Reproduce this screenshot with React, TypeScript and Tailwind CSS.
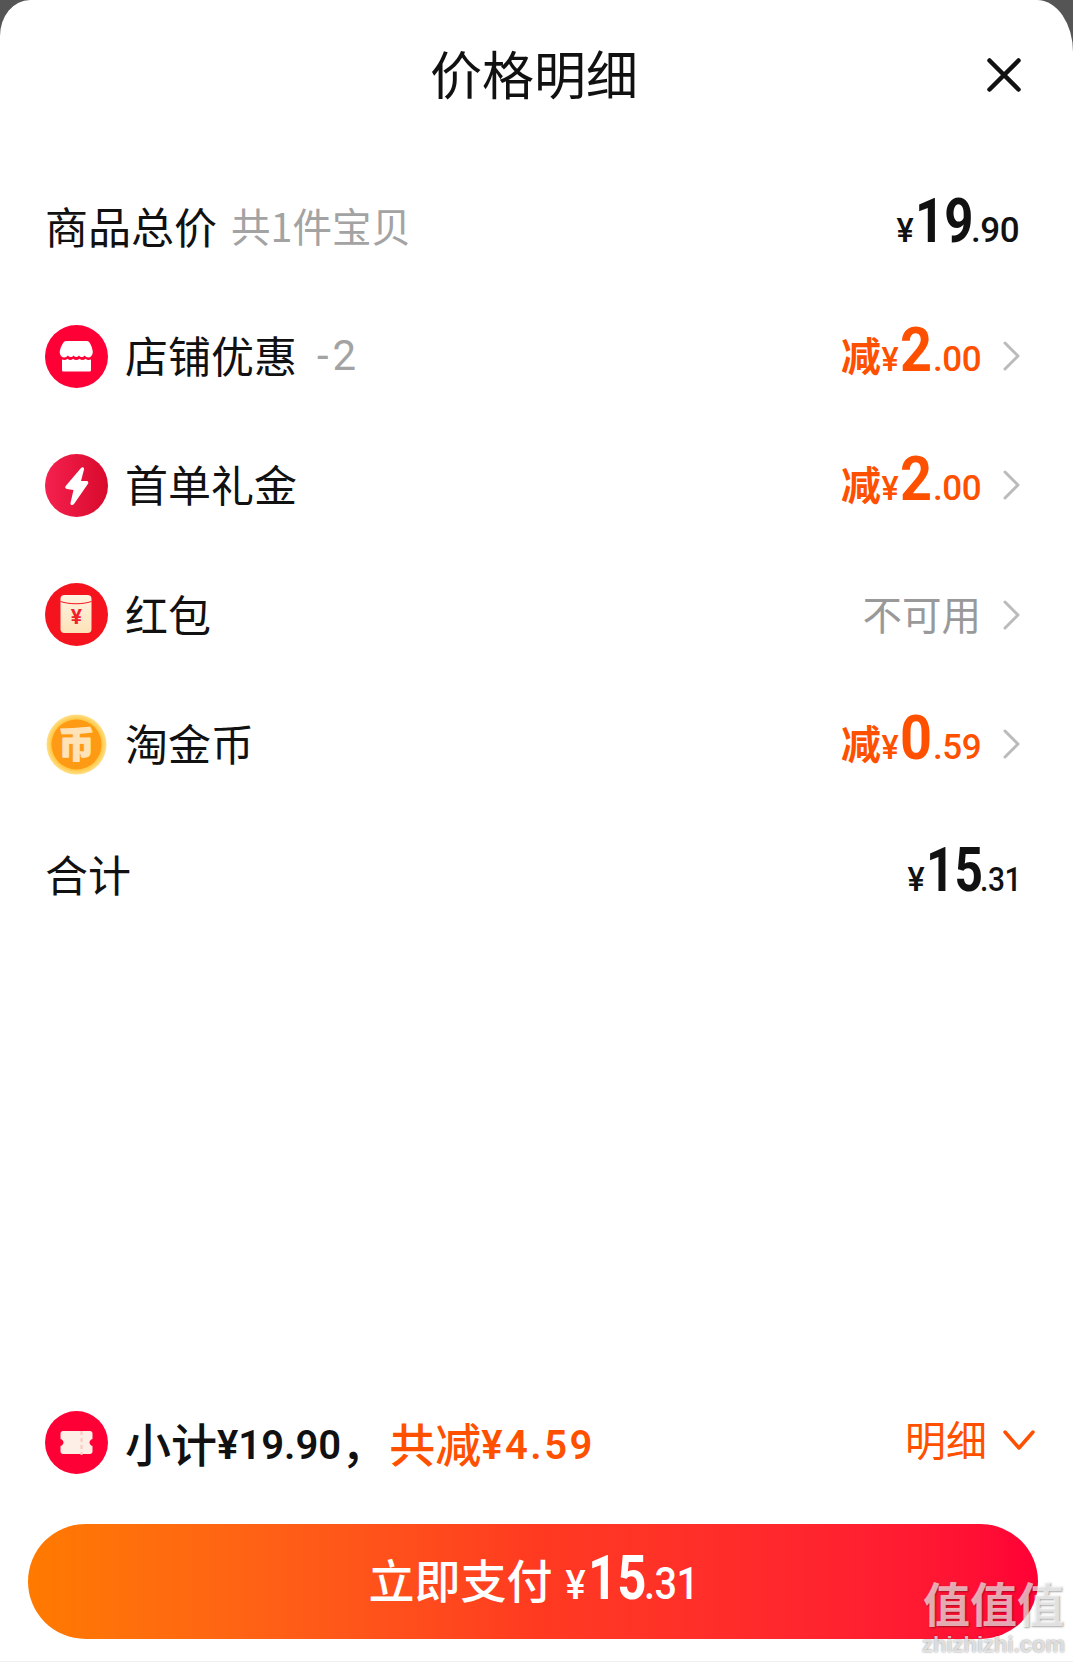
const cjk = '[font-family:"Noto_Sans_CJK_SC",sans-serif]';

// Amount with the small yen sign, a large integer part and small decimals
function Price({ int, dec, intClass, decClass, tone, yenClass = 'text-[34px]' }: { int: string; dec: string; intClass: string; decClass: string; tone: string; yenClass?: string }) {
  return (
    <span className={`flex items-baseline font-['Roboto',sans-serif] ${tone}`}>
      <span className={`${yenClass} scale-x-[0.95] font-medium mr-px`}>¥</span>
      <span className={`inline-block origin-left text-[62px] leading-none font-bold ${intClass}`}>{int}</span>
      <span className={`inline-block origin-left font-medium tracking-[-0.5px] ${decClass}`}>.{dec}</span>
    </span>
  );
}

function Discount({ int, dec }: { int: string; dec: string }) {
  return (
    <span className="flex items-baseline pb-[7px] text-[#ff5000]">
      <span className={`${cjk} text-[40px] font-bold leading-none`}>减</span>
      <Price int={int} dec={dec} intClass="w-[33px] scale-x-[0.9]" decClass="w-[48px] text-[35px]" tone="text-[#ff5000]" />
    </span>
  );
}

function Arrow() {
  return (
    <svg viewBox="0 0 18 30" className="ml-[22px] -mr-[2px] w-[18px] h-[30px] shrink-0">
      <path d="M2 2l13 13L2 28" fill="none" stroke="#bbbbbb" strokeWidth="3" strokeLinecap="round" strokeLinejoin="round" />
    </svg>
  );
}

function StoreIcon() {
  return (
    <svg viewBox="0 0 63 63" className="w-[63px] h-[63px] shrink-0">
      <circle cx="31.5" cy="31.5" r="31.5" fill="#ff0036" />
      <path d="M21 16h21c2.500 0 5 5 5.700 10 .5 3.500-1.700 6.500-4.200 6.500-1.800 0-2.900-.9-4-2-1.500 2-4 2-5.500 0-1.800 2-3.700 2-5.500 0-1.500 2-4 2-5.500 0-1.100 1.100-2.200 2-4 2-2.500 0-4.700-3-4.200-6.500C16 21 18.500 16 21 16z" fill="#fff" />
      <path d="M17 34.500c2 .8 4 .6 5.500-.8 2 1.800 4 1.800 5.500 0 2 1.800 4.500 1.800 6.500 0 2 1.800 4 1.800 6 0 1.500 1.400 3.500 1.600 5.500.8V45c0 1-.8 1.500-1.500 1.500H18.500c-.8 0-1.500-.5-1.500-1.500z" fill="#fff" />
    </svg>
  );
}

function BoltIcon() {
  return (
    <svg viewBox="0 0 63 63" className="w-[63px] h-[63px] shrink-0">
      <defs>
        <linearGradient id="boltBg" x1="0" x2="1" y1="0" y2="0">
          <stop offset="0" stopColor="#f5204f" />
          <stop offset="1" stopColor="#d80a2c" />
        </linearGradient>
      </defs>
      <circle cx="31.5" cy="31.5" r="31.5" fill="url(#boltBg)" />
      <path d="M36 14c1.500-1.500 3.500-.5 3 1.500L36 27h5.500c1.800 0 2.300 1.500 1.500 2.800L29 50c-1.500 2-4 1-3.500-1l3-13-6.500-1c-1.800-.3-2.300-1.800-1.300-3z" fill="#fff" />
    </svg>
  );
}

function EnvelopeIcon() {
  return (
    <svg viewBox="0 0 63 63" className="w-[63px] h-[63px] shrink-0">
      <defs>
        <linearGradient id="envBg" x1="0" x2="0" y1="0" y2="1">
          <stop offset="0" stopColor="#fff3e2" />
          <stop offset="1" stopColor="#fde2b8" />
        </linearGradient>
      </defs>
      <circle cx="31.5" cy="31.5" r="31.5" fill="#f5141e" />
      <rect x="15.5" y="12" width="31" height="38" rx="4" fill="url(#envBg)" />
      <path d="M15.5 18.500c9 3 22 3 31 0" fill="none" stroke="#f5141e" strokeWidth="1" />
      <text x="31.500" y="41" textAnchor="middle" fontSize="21" fontWeight="700" fill="#f0232c" fontFamily="Roboto, sans-serif">¥</text>
    </svg>
  );
}

function CoinIcon() {
  return (
    <svg viewBox="0 0 63 63" className="w-[63px] h-[63px] shrink-0">
      <defs>
        <radialGradient id="coinRim">
          <stop offset="0.8" stopColor="#ffc133" />
          <stop offset="1" stopColor="#ffe08a" />
        </radialGradient>
      </defs>
      <circle cx="31.500" cy="31.500" r="30" fill="url(#coinRim)" />
      <circle cx="31.500" cy="31.500" r="25" fill="#ff9a14" />
      <text x="31.500" y="44.500" textAnchor="middle" fontSize="36" fontWeight="900" fill="#ffe3b8" stroke="#ffe3b8" strokeWidth="1.200" strokeLinejoin="round" fontFamily="'Noto Sans CJK SC', sans-serif">币</text>
    </svg>
  );
}

function TicketIcon() {
  return (
    <svg viewBox="0 0 63 63" className="w-[63px] h-[63px] shrink-0">
      <circle cx="31.500" cy="31.500" r="31.500" fill="#ff0036" />
      <path d="M15.500 22.500c0-1.500 1-2.500 2.500-2.500h27c1.500 0 2.500 1 2.500 2.500v5.500c-2 .6-3 2-3 3.500s1 2.900 3 3.500v5.500c0 1.500-1 2.500-2.500 2.500H18c-1.500 0-2.500-1-2.500-2.500V35c2-.6 3-2 3-3.500s-1-2.900-3-3.500z" fill="#fdeee6" />
      <path d="M36.500 20v24" stroke="#fbc9bd" strokeWidth="2" strokeDasharray="4 3" />
    </svg>
  );
}

const rows = [
  { label: '首单礼金', icon: <BoltIcon />, right: <Discount int="2" dec="00" /> },
  { label: '红包', icon: <EnvelopeIcon />, right: <span className="pb-[4px] text-[39.5px] text-[#999999]">不可用</span> },
  { label: '淘金币', icon: <CoinIcon />, right: <Discount int="0" dec="59" /> },
];

export default function App() {
  return (
    <div className={`relative w-[1073px] h-[1662px] overflow-hidden bg-[#555555] ${cjk}`}>
      <div className="flex flex-col h-full bg-white rounded-tl-[30px_36px] rounded-tr-[36px_52px] text-[#111111]">
        <header className="relative flex h-[162px] shrink-0 items-center justify-center pb-[16px] pr-[5px]">
          <h1 className="text-[52px] font-normal leading-none">价格明细</h1>
          <svg viewBox="0 0 34 34" className="absolute right-[52px] top-[58px] w-[34px] h-[34px]">
            <path d="M2.500 2.500l29 29M31.500 2.500l-29 29" stroke="#111111" strokeWidth="4.500" strokeLinecap="round" />
          </svg>
        </header>

        <div className="flex flex-col pl-[45px] pr-[54px] text-[43px]">
          <div className="flex h-[130px] items-center justify-between">
            <div className="flex items-center pb-[4px]">
              <span>商品总价</span>
              <span className="ml-[14px] text-[39.5px] text-[#a3a3a3]">共1件宝贝</span>
            </div>
            <Price int="19" dec="90" intClass="w-[56px] scale-x-[0.82]" decClass="w-[48px] text-[35px]" tone="pb-[7px] text-[#111111]" />
          </div>

          <div className="flex h-[128.5px] items-center justify-between">
            <div className="flex items-center">
              <StoreIcon />
              <span className="ml-[17px] pb-[4px]">店铺优惠</span>
              <span className="ml-[20px] pb-[2px] font-['Roboto',sans-serif] text-[42px] tracking-[4px] text-[#a3a3a3]">-2</span>
            </div>
            <div className="flex items-center">
              <Discount int="2" dec="00" />
              <Arrow />
            </div>
          </div>

          {rows.map((row) => (
            <div key={row.label} className="flex h-[129.5px] items-center justify-between">
              <div className="flex items-center">
                {row.icon}
                <span className="ml-[17px] pb-[4px]">{row.label}</span>
              </div>
              <div className="flex items-center">
                {row.right}
                <Arrow />
              </div>
            </div>
          ))}

          <div className="flex h-[132px] items-center justify-between">
            <span className="pb-[4px]">合计</span>
            <Price int="15" dec="31" intClass="w-[54px] scale-x-[0.8]" decClass="w-[39px] text-[34px] scale-x-[0.88]" tone="pb-[7px] text-[#111111]" />
          </div>
        </div>

        <div className="mt-auto flex flex-col">
          <div className="flex h-[63px] items-center justify-between pl-[45px] pr-[38px]">
            <div className="flex items-center">
              <TicketIcon />
              <span className="ml-[17px] flex items-center text-[46px] font-medium">
                小计<span className="pt-[6px] font-['Roboto',sans-serif] text-[40px] font-semibold">¥19.90</span>
                <span className="mr-[2px]">，</span>
                <span className="text-[#ff5000] flex items-center">
                  共减<span className="pt-[6px] font-['Roboto',sans-serif] text-[40px] font-semibold tracking-[2.5px]">¥4.59</span>
                </span>
              </span>
            </div>
            <div className="flex items-center pb-[5px] text-[#ff5000]">
              <span className="text-[41px] pb-[2px]">明细</span>
              <svg viewBox="0 0 32 21" className="ml-[16px] w-[32px] h-[21px]">
                <path d="M2 2l14 16L30 2" fill="none" stroke="#ff5000" strokeWidth="3.500" strokeLinecap="round" strokeLinejoin="round" />
              </svg>
            </div>
          </div>

          <button className="mt-[50px] ml-[28px] mr-[35px] flex h-[115px] items-center justify-center rounded-full bg-gradient-to-r from-[#ff7a00] via-[#ff3a20] via-50% to-[#ff0036] text-white">
            <span className="pb-[6px] text-[46px] font-medium">立即支付</span>
            <span className="ml-[13px]">
              <Price int="15" dec="31" yenClass="text-[40px]" intClass="w-[56px] scale-x-[0.82]" decClass="w-[54px] text-[44px] scale-x-[0.9]" tone="text-white" />
            </span>
          </button>
          <div className="mt-[22px] h-px bg-[#f0f0f0]" />
        </div>
      </div>

      {/* site stamp over the lower right corner */}
      <div className="absolute right-[8px] bottom-[6px] flex flex-col items-center text-white/65 [text-shadow:1px_1px_2px_rgba(0,0,0,0.35)]">
        <span className="h-[44px] text-[47px] font-bold leading-[44px]">值值值</span>
        <span className="mt-[10px] font-['Liberation_Sans',sans-serif] text-[22px] font-bold leading-[22px] text-white/70 [text-shadow:0_0_2px_rgba(0,0,0,0.5)]">zhizhizhi.com</span>
      </div>
    </div>
  );
}
